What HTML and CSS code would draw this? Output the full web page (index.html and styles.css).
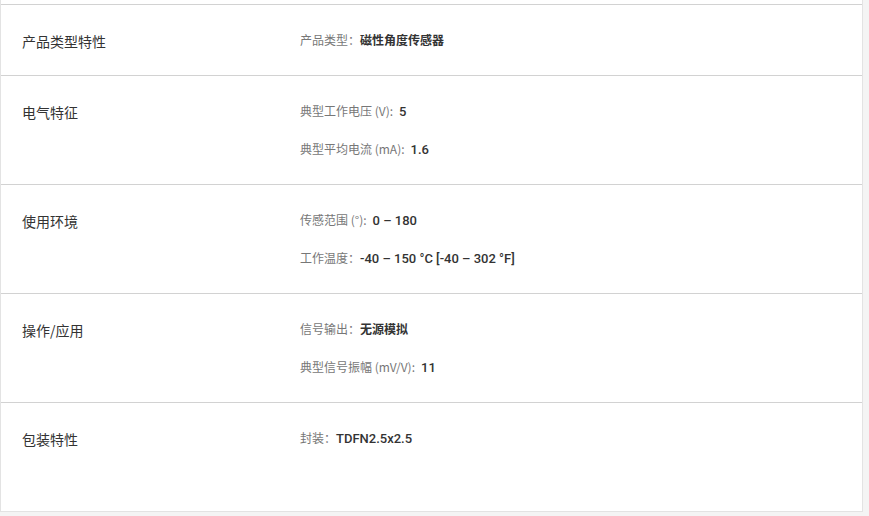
FILE: index.html
```html
<!DOCTYPE html>
<html lang="zh-CN">
<head>
<meta charset="utf-8">
<title>产品特性</title>
<link rel="stylesheet" href="styles.css">
</head>
<body>
<div class="card">
  <div class="row">
    <div class="title">产品类型特性</div>
    <div class="items">
      <div class="item"><span class="label">产品类型：</span><span class="value cjk">磁性角度传感器</span></div>
    </div>
  </div>
  <div class="row">
    <div class="title">电气特征</div>
    <div class="items">
      <div class="item"><span class="label gap">典型工作电压 (V):</span><span class="value">5</span></div>
      <div class="item"><span class="label gap">典型平均电流 (mA):</span><span class="value">1.6</span></div>
    </div>
  </div>
  <div class="row">
    <div class="title">使用环境</div>
    <div class="items">
      <div class="item"><span class="label gap">传感范围 (°):</span><span class="value">0 – 180</span></div>
      <div class="item"><span class="label">工作温度：</span><span class="value">-40 – 150 °C [-40 – 302 °F]</span></div>
    </div>
  </div>
  <div class="row">
    <div class="title">操作/应用</div>
    <div class="items">
      <div class="item"><span class="label">信号输出：</span><span class="value cjk">无源模拟</span></div>
      <div class="item"><span class="label gap">典型信号振幅 (mV/V):</span><span class="value">11</span></div>
    </div>
  </div>
  <div class="row">
    <div class="title">包装特性</div>
    <div class="items">
      <div class="item"><span class="label">封装：</span><span class="value">TDFN2.5x2.5</span></div>
    </div>
  </div>
</div>
</body>
</html>
```
FILE: styles.css
```css
html, body {
  margin: 0;
  padding: 0;
}
body {
  background: #f4f4f4;
  font-family: "Noto Sans CJK SC", sans-serif;
  color: #333;
}
.card {
  width: 861px;
  background: #fff;
  border-left: 1px solid #e3e3e3;
  border-right: 1px solid #e3e3e3;
  border-bottom: 1px solid #e3e3e3;
  padding-top: 4px;
  padding-bottom: 38px;
}
.row {
  display: grid;
  grid-template-columns: 278px 1fr;
  align-items: start;
  border-top: 1px solid #d2d2d2;
  padding: 16px 0 16px 21px;
}
.title {
  font-size: 14px;
  line-height: 32px;
  margin-top: 4px;
  color: #333;
}
.item {
  display: flex;
  align-items: baseline;
  height: 38px;
  line-height: 38px;
}
.label {
  font-size: 12px;
  color: #777;
}
.label.gap {
  margin-right: 6px;
}
.value {
  font-family: Roboto, "Noto Sans CJK SC", sans-serif;
  font-size: 13px;
  font-weight: 500;
  color: #333;
}
.value.cjk {
  font-family: "Noto Sans CJK SC", sans-serif;
  font-size: 12px;
  font-weight: 700;
}
```
